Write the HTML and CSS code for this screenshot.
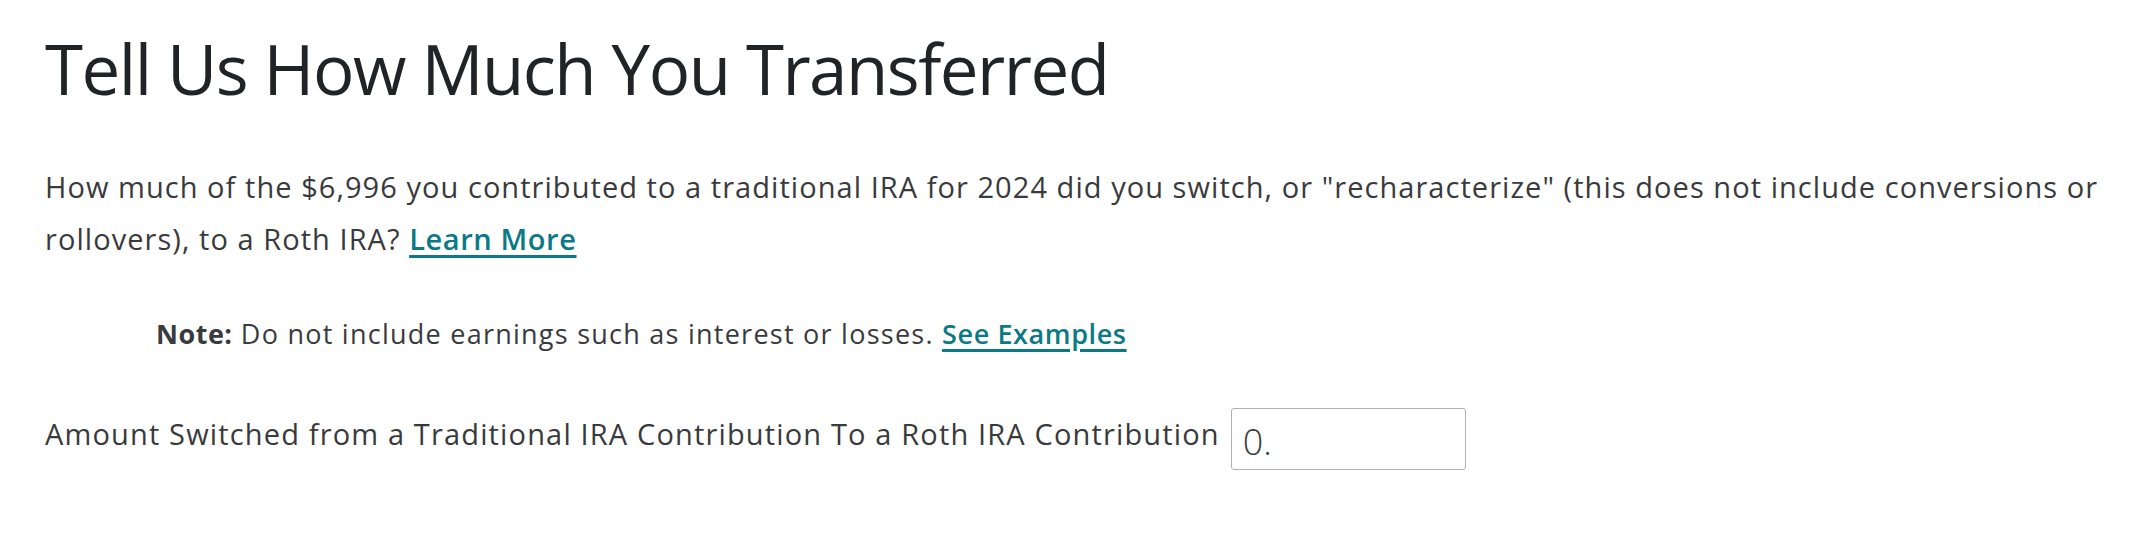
FILE: index.html
```html
<!DOCTYPE html>
<html>
<head>
<meta charset="utf-8">
<link rel="stylesheet" href="styles.css">
</head>
<body>
<main class="page">
  <h1 class="title">Tell Us How Much You Transferred</h1>
  <p class="question">How much of the $6,996 you contributed to a traditional IRA for 2024 did you switch, or "recharacterize" (this does not include conversions or rollovers), to a Roth IRA? <a class="link" href="#">Learn More</a></p>
  <p class="note"><strong>Note:</strong> Do not include earnings such as interest or losses. <a class="link" href="#">See Examples</a></p>
  <div class="field">
    <label class="field-label" for="amt">Amount Switched from a Traditional IRA Contribution To a Roth IRA Contribution</label>
    <input class="field-input" id="amt" type="text" value="0.">
  </div>
</main>
</body>
</html>
```
FILE: styles.css
```css
html, body {
  margin: 0;
  padding: 0;
  background: #ffffff;
}
body {
  font-family: "Open Sans", "Noto Sans", sans-serif;
  color: #393a3d;
}
.page {
  padding: 0 20px 0 45px;
}
.title {
  margin: 0;
  padding-top: 23px;
  font-size: 69px;
  line-height: 90px;
  font-weight: 400;
  letter-spacing: -1.5px;
  color: #212427;
}
.question {
  margin: 48px 0 0;
  font-size: 29px;
  line-height: 52px;
  letter-spacing: 1.05px;
}
.link {
  color: #0b7a87;
  font-weight: 600;
  letter-spacing: 0.6px;
  text-decoration: underline;
  text-underline-offset: 5px;
  text-decoration-thickness: 3px;
}
.note {
  margin: 43px 0 0 111px;
  font-size: 27px;
  line-height: 52px;
  letter-spacing: 1.25px;
}
.note strong {
  font-weight: 700;
  letter-spacing: 0.5px;
  color: #393a3d;
}
.field {
  display: flex;
  align-items: center;
  gap: 11px;
  margin-top: 48px;
}
.field-label {
  font-size: 29px;
  line-height: 52px;
  letter-spacing: 1.15px;
  margin-bottom: 10px;
}
.field-input {
  width: 235px;
  height: 62px;
  box-sizing: border-box;
  border: 1.5px solid #aeb0b2;
  border-radius: 3px;
  padding: 4px 11px 0;
  font-family: "Open Sans", sans-serif;
  font-weight: 300;
  font-size: 36px;
  color: #393a3d;
  background: #ffffff;
}
```
